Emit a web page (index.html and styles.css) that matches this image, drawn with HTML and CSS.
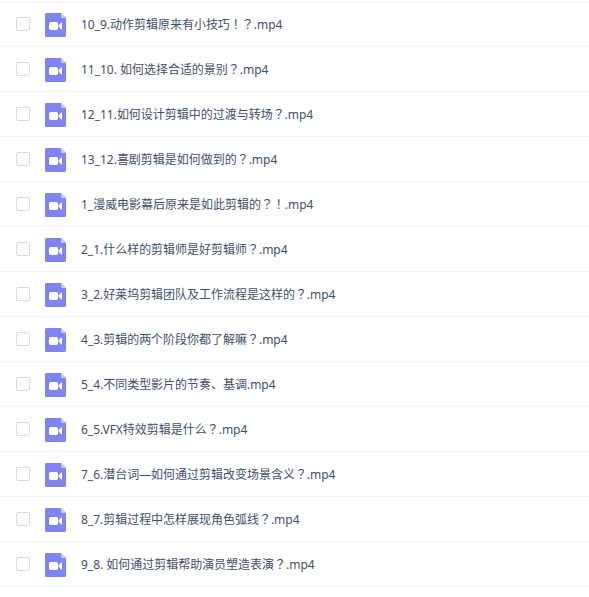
FILE: index.html
```html
<!DOCTYPE html>
<html lang="zh-CN">
<head>
  <meta charset="UTF-8">
  <meta name="viewport" content="width=device-width, initial-scale=1.0">
  <title>文件列表</title>
  <link rel="stylesheet" href="styles.css">
</head>
<body>

  <ul class="file-list" id="fileList"></ul>

  <template id="fileRow">
    <li class="file-row">
      <input type="checkbox" class="file-check">
      <svg class="file-icon" width="21" height="24" viewBox="0 0 21 24">
        <path fill="#8183f1" d="M1.5 0H16l5 5v17.5a1.5 1.5 0 0 1-1.5 1.5h-18A1.5 1.5 0 0 1 0 22.5v-21A1.5 1.5 0 0 1 1.5 0z"/>
        <path fill="#c8c9fa" d="M16 0l5 5h-4a1 1 0 0 1-1-1z"/>
        <rect fill="#fff" x="4" y="9" width="9" height="8" rx="1.8"/>
        <path fill="#fff" d="M13.7 12.2L16.3 9.5q.7-.5.7.4v6.200q0 .9-.7.4l-2.6-2.7z"/>
      </svg>
      <span class="file-name"></span>
    </li>
  </template>

  <script>
    const files = [
      "10_9.动作剪辑原来有小技巧！？.mp4",
      "11_10. 如何选择合适的景别？.mp4",
      "12_11.如何设计剪辑中的过渡与转场？.mp4",
      "13_12.喜剧剪辑是如何做到的？.mp4",
      "1_漫威电影幕后原来是如此剪辑的？！.mp4",
      "2_1.什么样的剪辑师是好剪辑师？.mp4",
      "3_2.好莱坞剪辑团队及工作流程是这样的？.mp4",
      "4_3.剪辑的两个阶段你都了解嘛？.mp4",
      "5_4.不同类型影片的节奏、基调.mp4",
      "6_5.VFX特效剪辑是什么？.mp4",
      "7_6.潜台词—如何通过剪辑改变场景含义？.mp4",
      "8_7.剪辑过程中怎样展现角色弧线？.mp4",
      "9_8. 如何通过剪辑帮助演员塑造表演？.mp4"
    ];

    const list = document.getElementById('fileList');
    const template = document.getElementById('fileRow');

    files.forEach((name) => {
      const row = template.content.cloneNode(true);
      const label = row.querySelector('.file-name');

      // ！ and ？ sit in the middle of their cell
      name.split(/([！？]+)/).forEach((part) => {
        const span = document.createElement('span');
        span.textContent = part;
        if (/[！？]/.test(part)) {
          span.className = 'mark';
          span.lang = 'zh-TW';
        }
        label.appendChild(span);
      });

      list.appendChild(row);
    });
  </script>
</body>
</html>
```
FILE: styles.css
```css
body {
  margin: 0;
  padding-top: 2px;
  background-color: #fff;
  font-family: "Noto Sans", "Noto Sans CJK SC", sans-serif;
  font-size: 12px;
  color: #424e67;
}

.file-list {
  margin: 0;
  padding: 0;
  list-style: none;
}

.file-row {
  display: flex;
  align-items: flex-end;
  box-sizing: border-box;
  height: 45px;
  padding-left: 16px;
  border-bottom: 1px solid #eff5fc;
}

.file-row:first-child {
  border-top: 1px solid #f1f3fc;
}

.file-check {
  appearance: none;
  box-sizing: border-box;
  width: 14px;
  height: 14px;
  margin: 0 15px 15px 0;
  border: 1px solid #d5dae3;
  border-radius: 2px;
  background-color: #fff;
}

.file-icon {
  flex: none;
  margin: 0 15px 9px 0;
}

.file-name {
  margin-bottom: 11px;
  line-height: 20px;
  letter-spacing: -0.02px;
  white-space: pre;
}

.mark {
  font-family: "Noto Sans", "Noto Sans CJK TC", sans-serif;
}
```
